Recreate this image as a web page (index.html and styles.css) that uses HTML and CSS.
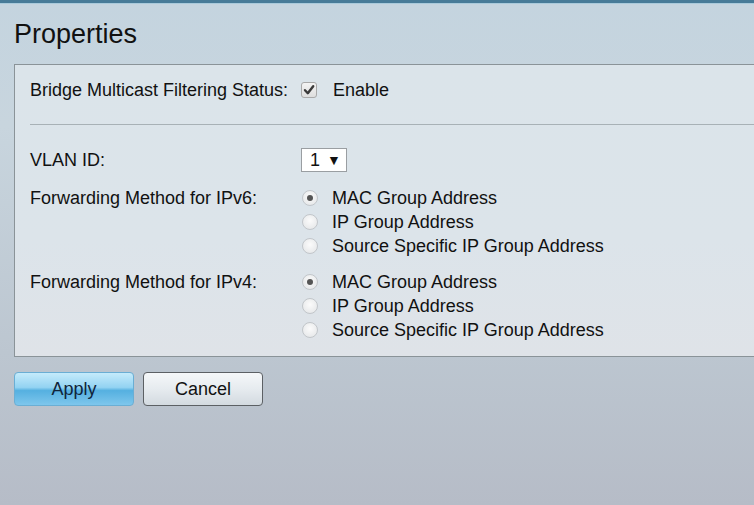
FILE: index.html
```html
<!DOCTYPE html>
<html lang="en">
<head>
  <meta charset="UTF-8" />
  <title>Properties</title>
  <link rel="stylesheet" href="styles.css">
</head>
<body>
  <div class="top-strip"></div>
  <h1 class="page-title">Properties</h1>

  <div class="panel">
    <div class="row">
      <span class="label">Bridge Multicast Filtering Status:</span>
      <span class="field">
        <span class="checkbox">
          <svg width="12" height="12" viewBox="0 0 12 12"><path d="M2 6.2 L4.8 9.2 L10.2 2.2" fill="none" stroke="#3a3a3a" stroke-width="2.4" stroke-linecap="round" stroke-linejoin="round"/></svg>
        </span>
        <span class="enable-text">Enable</span>
      </span>
    </div>

    <div class="separator"></div>

    <div class="row">
      <span class="label">VLAN ID:</span>
      <span class="field">
        <span class="select"><span>1</span><span class="arrow">&#9660;</span></span>
      </span>
    </div>

    <div class="group group-v6">
      <span class="label">Forwarding Method for IPv6:</span>
      <div class="options">
        <div class="option"><span class="radio checked"></span>MAC Group Address</div>
        <div class="option"><span class="radio"></span>IP Group Address</div>
        <div class="option"><span class="radio"></span>Source Specific IP Group Address</div>
      </div>
    </div>

    <div class="group group-v4">
      <span class="label">Forwarding Method for IPv4:</span>
      <div class="options">
        <div class="option"><span class="radio checked"></span>MAC Group Address</div>
        <div class="option"><span class="radio"></span>IP Group Address</div>
        <div class="option"><span class="radio"></span>Source Specific IP Group Address</div>
      </div>
    </div>
  </div>

  <div class="buttons">
    <button class="btn btn-apply">Apply</button>
    <button class="btn btn-cancel">Cancel</button>
  </div>
</body>
</html>
```

FILE: styles.css
```css
html, body {
  height: 100%;
}

body {
  margin: 0;
  font-family: "Liberation Sans", Arial, sans-serif;
  color: #111;
  background: linear-gradient(180deg, #c4d4df 0%, #c8d5de 25%, #bcc6d0 70%, #b6bcc7 100%);
  overflow: hidden;
}

.top-strip {
  height: 3px;
  background: #477b98;
  border-bottom: 1px solid #a9cadb;
}

.page-title {
  margin: 14px 0 14px 14px;
  font-size: 27px;
  font-weight: normal;
  line-height: 32px;
  color: #111;
}

.panel {
  margin-left: 14px;
  border: 1px solid #8a9398;
  border-right: none;
  background: linear-gradient(180deg, #dbe4ea 0%, #dce4ea 60%, #dfe3e8 100%);
  padding: 13px 0 14px 15px;
  font-size: 18px;
}

.row, .group {
  display: flex;
  align-items: flex-start;
}

.row {
  height: 24px;
  line-height: 24px;
}

.label {
  width: 271px;
  flex-shrink: 0;
  line-height: 24px;
}

.field {
  display: flex;
  align-items: center;
  height: 24px;
}

.checkbox {
  width: 14px;
  height: 14px;
  border: 1px solid #a9a9a9;
  border-radius: 3px;
  background: linear-gradient(180deg, #f4f4f4, #dedede);
  display: flex;
  align-items: center;
  justify-content: center;
}

.enable-text {
  margin-left: 16px;
}

.separator {
  height: 1px;
  background: #a8b1b6;
  margin: 22px 0 23px;
}

.select {
  width: 44px;
  height: 22px;
  border: 1px solid #9a9ea2;
  background: #fff;
  display: flex;
  align-items: center;
  line-height: 22px;
}

.select span:first-child {
  margin-left: 8px;
}

.arrow {
  font-size: 14px;
  margin-left: 7px;
}

.group-v6 {
  margin-top: 14px;
}

.group-v4 {
  margin-top: 12px;
}

.option {
  display: flex;
  align-items: center;
  height: 24px;
  line-height: 24px;
}

.radio {
  width: 14px;
  height: 14px;
  margin: 0 14px 0 1px;
  border: 1px solid #c2c6ca;
  border-radius: 50%;
  background: radial-gradient(circle at 50% 40%, #fbfbfb, #e2e4e6);
  display: flex;
  align-items: center;
  justify-content: center;
}

.radio.checked::after {
  content: "";
  width: 6px;
  height: 6px;
  border-radius: 50%;
  background: #555;
}

.buttons {
  display: flex;
  gap: 9px;
  margin: 15px 0 0 14px;
}

.btn {
  width: 120px;
  height: 34px;
  font-family: "Liberation Sans", Arial, sans-serif;
  font-size: 18px;
  border-radius: 4px;
  padding: 0;
  cursor: pointer;
}

.btn-apply {
  color: #10243a;
  border: 1px solid #6aaed4;
  background: linear-gradient(180deg, #c5ebfb 0%, #93d3f2 45%, #55b0e0 55%, #7ec6ec 100%);
}

.btn-cancel {
  color: #111;
  border: 1px solid #5c6064;
  background: linear-gradient(180deg, #f5f7f9 0%, #e6ebef 50%, #d3dae0 100%);
}
```
